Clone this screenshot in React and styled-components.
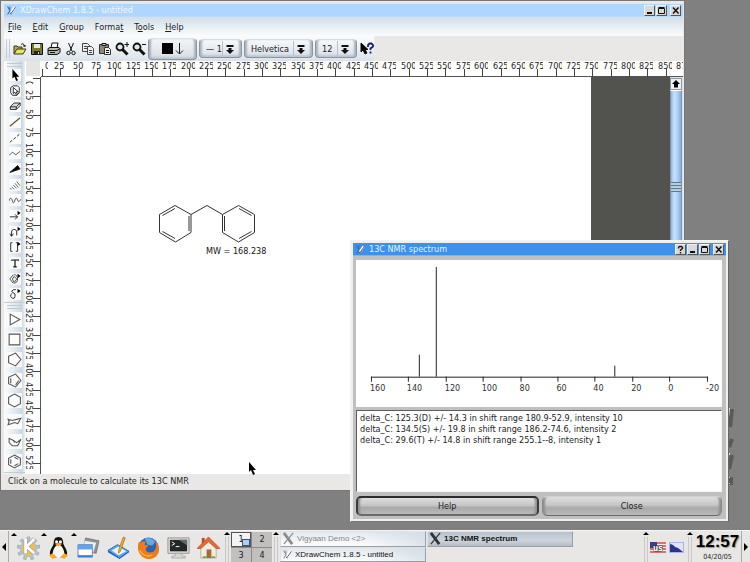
import styled, { createGlobalStyle } from 'styled-components';

const GlobalStyle = createGlobalStyle`
  * {
    box-sizing: border-box;
  }
  body {
    margin: 0;
    background: #808080;
    font-family: 'DejaVu Sans Condensed', 'Liberation Sans', Arial, sans-serif;
    font-size: 9px;
    color: #1c1c1c;
  }
  button, select, textarea {
    font: inherit;
    color: inherit;
    margin: 0;
    padding: 0;
    border: 0;
    background: none;
  }
  svg {
    display: block;
    flex: none;
  }
`;

const Desktop = styled.div`
  position: relative;
  display: flex;
  flex-direction: column;
  height: 100vh;
  min-height: 520px;
  overflow: hidden;
`;

const Workspace = styled.main`
  position: relative;
  flex: 1;
`;

/* ---------- windows ---------- */

const MainWindow = styled.section`
  position: absolute;
  inset: 0 65px 39px 0;
  display: flex;
  flex-direction: column;
  border: 1px solid #77777a;
  padding: 3px 1px 1px 3px;
  background: #e9e8e6;
`;

const Dialog = styled.section`
  position: absolute;
  inset: 240px 21px 8px 350px;
  display: flex;
  flex-direction: column;
  border: 1px solid #f4f4f2;
  border-right-color: #666;
  border-bottom-color: #777;
  padding: 2px;
  background: #efefec;
`;

const TitleBar = styled.header`
  display: flex;
  align-items: center;
  height: 13px;
  flex: none;
  padding: 0 2px 0 2px;
  gap: 3px;
  background: ${props => (props.$active ? '#3e91ea' : '#aed6ff')};
  border-bottom: 1px solid ${props => (props.$active ? '#7db4ee' : '#bcd9f6')};
`;

const Title = styled.h1`
  flex: 1;
  margin: 0;
  font-size: 9px;
  line-height: 12px;
  font-weight: 400;
  color: ${props => (props.$active ? '#e4f1ff' : '#f2f9ff')};
`;

const WindowButtons = styled.div`
  display: flex;
  gap: 1px;

  button:last-child {
    margin-left: 2px;
  }
`;

const WindowButton = styled.button`
  display: flex;
  width: 11px;
  height: 11px;
  border: 1px solid #f2f2f2;
  border-right-color: #555;
  border-bottom-color: #555;
  background: #d9dad8;
`;

const MenuBar = styled.nav`
  display: flex;
  gap: 11px;
  height: 19px;
  flex: none;
  padding: 0 4px;
  background: linear-gradient(#d3dee7, #fafcfd);
`;

const MenuItem = styled.button`
  line-height: 18px;

  u {
    text-underline-offset: 1px;
  }
`;

const ToolBar = styled.div`
  display: flex;
  align-items: center;
  align-self: flex-start;
  height: 25px;
  flex: none;
  padding: 0 0 0 2px;
  background: linear-gradient(#fafbfc, #eef1f4 50%, #d9e2ea);
`;

const Grip = styled.span`
  flex: none;
  width: ${props => (props.$flat ? '15px' : '4px')};
  height: ${props => (props.$flat ? '4px' : '19px')};
  border: 0 solid #c4c9cc;
  border-width: ${props => (props.$flat ? '1px 0' : '0 1px')};
`;

const ToolButton = styled.button`
  display: flex;
  align-items: center;
  justify-content: center;
  width: ${props => (props.$narrow ? '15px' : '17px')};
  height: 20px;
`;

const IconRow = styled.div`
  display: flex;
  margin: 0 1px;
`;

const ColorButton = styled.button`
  display: flex;
  align-items: center;
  justify-content: center;
  width: 49px;
  height: 22px;
  margin-right: 2px;
  border: 1px solid #8d959c;
  border-top-color: #dde2e7;
  border-radius: 4px;
  box-shadow: inset 3px 0 2px -1px #a9b4bf, inset -3px 0 2px -1px #a9b4bf, inset 0 -2px 2px #bfc9d3;
  background: linear-gradient(#f2f5f8, #d7dee5);
`;

const ComboBox = styled.label`
  position: relative;
  display: flex;
  align-items: center;
  width: ${props => props.$width};
  height: 19px;
  margin-right: 2px;
  border: 1px solid #8d959c;
  border-top-color: #d5dbe1;
  border-radius: 4px;
  box-shadow: inset 3px 0 2px -1px #aab5c0, inset -3px 0 2px -1px #aab5c0, inset 0 -2px 2px #bfc9d3;
  background: linear-gradient(#f7f9fb, #d9e0e7);

  select {
    appearance: none;
    width: 100%;
    height: 16px;
    padding-left: 6px;
    line-height: 16px;
    outline: none;
  }
  svg {
    position: absolute;
    right: 3px;
    top: 1px;
    pointer-events: none;
  }
`;

const Body = styled.div`
  display: flex;
  flex: 1;
  min-height: 0;
`;

const ToolColumn = styled.aside`
  display: flex;
  flex-direction: column;
  width: 21px;
  flex: none;
  overflow: hidden;
  background: linear-gradient(90deg, #fbfcfc, #dfe7ee 55%, #c9d7e3 85%, #eef2f5);
`;

const ToolGroup = styled.div`
  display: flex;
  flex-direction: column;
  align-items: center;
  flex: none;
  height: ${props => props.$height};
  padding-top: 2px;
  border-bottom: 1px solid #c9cccd;
`;

const SideButton = styled.button`
  display: flex;
  flex: 1;
  align-items: center;
  justify-content: center;
  width: ${props => (props.$wide ? '17px' : '14px')};

  svg {
    background: #fbfbfb;
  }
`;

const DrawingArea = styled.div`
  display: flex;
  flex: 1;
  flex-direction: column;
  min-width: 0;
  background: #fff;
`;

const RulerStrip = styled.div`
  flex: none;
  overflow: hidden;
  width: ${props => (props.$vertical ? '16px' : '100%')};
  height: ${props => (props.$vertical ? '100%' : '16px')};
`;

const Viewport = styled.div`
  display: flex;
  flex: 1;
  min-height: 0;
`;

const Backdrop = styled.div`
  display: flex;
  flex: 1;
  min-width: 0;
  overflow: hidden;
  background: #52524f;
`;

const Sheet = styled.div`
  flex: none;
  background: #fff;
`;

const ScrollBar = styled.div`
  display: flex;
  flex-direction: column;
  width: 13px;
  flex: none;
  padding: 1px 1px 0 0;
  background: #dbe4ec;
`;

const ScrollArrow = styled.button`
  display: flex;
  align-items: center;
  justify-content: center;
  height: 12px;
  border: 1px solid #8f9aa3;
  background: #eaf1f7;
`;

const ScrollThumb = styled.div`
  display: flex;
  align-items: center;
  height: 194px;
  border: 1px solid #7d94ab;
  border-top-color: #fff;
  background: linear-gradient(90deg, #8db5de, #c7e1ff 30%, #b0d4fc 60%, #85afe0);
`;

const ThumbGrip = styled.span`
  width: 100%;
  height: 10px;
  background: repeating-linear-gradient(#61798c 0 1px, #b4cfe0 1px 3px);
`;

const StatusBar = styled.footer`
  flex: none;
  height: 15px;
  padding: 0 4px;
  line-height: 14px;
  background: #e9e8e6;
`;

/* ---------- spectrum dialog ---------- */

const DialogBody = styled.div`
  display: flex;
  flex: 1;
  flex-direction: column;
  gap: 3px;
  min-height: 0;
  padding: 4px 4px 3px 3px;
  background: #c0c0c0;
`;

const Plot = styled.div`
  flex: none;
  background: #fff;

  svg {
    width: 100%;
    height: auto;
  }
`;

const Peaks = styled.textarea`
  flex: 1;
  width: 100%;
  min-height: 0;
  padding: 2px 3px;
  border: 1px solid #f4f4f4;
  border-top-color: #5d5d5d;
  border-left-color: #5d5d5d;
  background: #fff;
  line-height: 11px;
  resize: none;
  outline: none;
`;

const DialogButtons = styled.div`
  display: flex;
  gap: 3px;
  padding-top: 1px;
`;

const DialogButton = styled.button`
  flex: 1;
  height: 20px;
  line-height: 15px;
  border: ${props => (props.$default ? '2px solid #3c3c3c' : '1px solid #8b8b8b')};
  border-top-color: ${props => (props.$default ? '#2d2d2d' : '#d2d2d2')};
  border-bottom-color: #6a6a6a;
  border-radius: 5px;
  box-shadow: inset 4px 0 2px -2px #8f8f8f, inset -4px 0 2px -2px #8f8f8f;
  background: linear-gradient(#dedede, #c6c6c6 45%, #a9a9a9 60%, #b9b9b9);
`;

/* ---------- panel ---------- */

const Panel = styled.footer`
  display: flex;
  height: 32px;
  flex: none;
  border-top: 1px solid #f6f5f4;
  background: #e9e7e5;
`;

const PanelHide = styled.button`
  display: flex;
  align-items: center;
  justify-content: center;
  width: 9px;
  flex: none;
  border: 0 solid #aaa;
  border-width: ${props => (props.$end ? '0 0 0 1px' : '0 1px 0 0')};
`;

const Launchers = styled.div`
  display: flex;
  padding-left: 4px;
`;

const Launcher = styled.button`
  position: relative;
  display: flex;
  align-items: center;
  justify-content: center;
  width: 30px;
  padding-top: 3px;
`;

const MenuMark = styled.i`
  position: absolute;
  left: -2px;
  top: 2px;
  border: 3px solid transparent;
  border-top-width: 0;
  border-bottom: 3px solid #000;
`;

const PanelGrip = styled.span`
  position: relative;
  width: 4px;
  flex: none;
  margin: 6px 2px 0 2px;
  border: 0 solid #c9c7c5;
  border-width: 0 1px;

  ${MenuMark} {
    top: -5px;
  }
`;

const Pager = styled.div`
  display: grid;
  grid-template-columns: 20px 20px;
  grid-template-rows: 1fr 1fr;
  gap: 1px;
  margin-top: 1px;
  background: #8b8986;
`;

const PagerCell = styled.button`
  position: relative;
  background: ${props => (props.$current ? '#f3f3f3' : '#c2c0be')};
  border: ${props => (props.$current ? '1px solid #555' : '0')};

  i {
    position: absolute;
    right: 0;
    bottom: 0;
    width: 8px;
    height: 7px;
    border: 1px solid #456;
    background: #a9ceff;
  }
`;

const TaskList = styled.div`
  display: grid;
  grid-template-columns: 146px 146px;
  grid-template-rows: 1fr 1fr;
  flex: 1;
  column-gap: 1px;
`;

const Task = styled.button`
  display: flex;
  align-items: center;
  gap: 2px;
  padding: 0 1px;
  font-family: 'Liberation Sans', Arial, sans-serif;
  font-size: 8px;
  white-space: nowrap;
  color: ${props => (props.$dim ? '#85888b' : '#111')};
  font-weight: ${props => (props.$active ? 700 : 400)};
  border: 1px solid #99a1a8;
  border-top-color: #dce1e5;
  border-left-color: #dce1e5;
  background: ${props =>
    props.$active
      ? 'linear-gradient(#b9c2ca, #ccd5dc 60%, #b4bdc6)'
      : 'linear-gradient(90deg, transparent 60%, #c9d6e199), linear-gradient(#e4e9ed, #fbfcfd)'};
`;

const Tray = styled.div`
  display: flex;
  align-items: center;
  gap: 3px;
  padding: 2px 1px 0 0;
`;

const Clock = styled.time`
  display: flex;
  flex-direction: column;
  align-items: center;
  width: 47px;
  font-size: 7px;
  line-height: 8px;

  strong {
    font-family: 'Liberation Sans', Arial, sans-serif;
    font-size: 17px;
    line-height: 22px;
    color: #000;
    text-shadow: 1px 1px 1px #999;
  }
`;

const DesktopLabel = styled.svg`
  position: absolute;
  right: 12px;
  top: 405px;
`;

const Pointer = styled.svg`
  position: absolute;
  left: 248px;
  top: 462px;
`;

/* ---------- icons ---------- */

function Icon({ size = 14, children, ...rest }) {
  return (
    <svg width={size} height={size} viewBox='0 0 14 14' fill='none' stroke='#111' aria-hidden='true' {...rest}>
      {children}
    </svg>
  );
}

const AppIcon = ({ dim }) => (
  <Icon size={11}>
    <path d='M2 2l3 5-3 5M5 7l2 5M5 2v4' stroke={dim ? '#8a8f94' : '#3b6b9e'} strokeWidth='1.3' />
    <path d='M6 10l5-7' stroke='#fff' strokeWidth='3' />
    <path d='M5 11l2-1 5-7' stroke='#345' strokeWidth='1' />
  </Icon>
);

const XIcon = ({ dim }) => (
  <Icon size={13}>
    <path d='M2 1l9 12' stroke={dim ? '#8c8c8c' : '#333'} strokeWidth='3' />
    <path d='M12 1L2 13' stroke={dim ? '#8c8c8c' : '#333'} strokeWidth='1.3' />
  </Icon>
);

const controlGlyphs = {
  Help: <path d='M2.500 3.500V2.500l1-1h2l1 1v1l-2 1.500v1M4.500 7v1.500' strokeWidth='1.400' />,
  Minimize: <path d='M2 7h5' strokeWidth='2' />,
  Maximize: <path d='M1.500 2.500h6v5h-6zM1.500 1.500h6' />,
  Close: <path d='M2 1.500l5.500 6M7.500 1.500L2 7.500' strokeWidth='1.500' />,
};

const DropArrow = () => (
  <svg width='16' height='15' viewBox='0 0 16 15' aria-hidden='true'>
    <path d='M0 0h1v15H0z' fill='#b7c1cb' />
    <path d='M4.500 4h7v2h-7zM6.500 7h3v2h2.500L8 13 4 9h2.500z' fill='#111' />
  </svg>
);

const magnifier = (
  <>
    <circle cx='5' cy='5' r='3.500' fill='#dfe8ee' strokeWidth='1.800' />
    <path d='M7.500 7.500l5 5' strokeWidth='3' />
  </>
);

const toolbarIcons = [
  ['Open', <><path d='M1 12V4h3l1 1h4v2' fill='#b5a94a' stroke='#3b3b10' /><path d='M1 12l3-5h9l-3 5z' fill='#e8e26e' stroke='#3b3b10' /><path d='M8 2.500c2-1.500 3.500 0 3.500 2M10 4h3' /></>],
  ['Save', <><path d='M1.500 1.500h11v11h-11z' fill='#77792b' /><path d='M4 2h6v4H4z' fill='#e8e8d8' stroke='none' /><path d='M4 9h6v4H4z' fill='#222' stroke='none' /><path d='M8 10h1v2H8z' fill='#ddd' stroke='none' /></>],
  ['Print', <><path d='M4 6l1-5h6l-1 5' fill='#fff' /><path d='M1 6.500l2-1h9l1 1v4l-3 2H1z' fill='#b9b9aa' /><path d='M1 8.500h9l3-2M3 10.500h5' /></>],
  ['Cut', <><path d='M4.500 1l3.500 8M9.500 1L6 9' /><circle cx='4.500' cy='11' r='1.700' /><circle cx='9.500' cy='11' r='1.700' /></>],
  ['Copy', <g stroke='#444'><path d='M1.500 1.500h5l2 2v6h-7z' fill='#eee' /><path d='M6.500 4.500h4l2 2v6h-6z' fill='#eee' /><path d='M3 4.500h3M3 6.500h3M8 8.500h3M8 10.500h3' /></g>],
  ['Paste', <><path d='M1.500 2.500h9v9h-9z' fill='#8c8a77' stroke='#333' /><path d='M4 1.500h4v2H4z' fill='#ddd' /><path d='M6.500 5.500h4l2 2v5h-6z' fill='#eee' stroke='#333' /><path d='M8 8.500h3M8 10.500h3' /></>],
  ['Zoom in', <>{magnifier}<path d='M12 0v5M9.500 2.500h5' /></>],
  ['Zoom out', <>{magnifier}<path d='M10 2.500h4' /></>],
];

const flyout = <path d='M10 1l3.500 2.500L10 6z' fill='#000' stroke='none' />;

const drawTools = [
  ['Select', <path d='M4 0v11l2.500-2 1.800 5 2.200-1-2-4h3.500z' fill='#000' stroke='none' />],
  ['Lasso', <><path d='M2 3l3-2h5l2 2v6l-3 3H4L2 9z' /><path d='M5 3v7l2-1.500 2 3.500 1-1-1.500-3H11z' fill='#fff' /></>],
  ['Erase', <path d='M1.500 8L6 3.500h7L8.500 8zM1.500 8v3h7V8M8.500 11L13 6.500v-3' fill='#ddd' />],
  ['Line', <path d='M1 12L13 2' stroke='#55551a' strokeWidth='1.300' />],
  ['Dashed line', <path d='M1 12L13 2' strokeDasharray='3.500 2' />],
  ['Chain', <path d='M0 10l4-4 4 3 5-4' stroke='#444' />],
  ['Wedge', <path d='M1 11L10 3l3 4z' fill='#000' />],
  ['Hash', <path d='M1 11l2 1M3 9l3 3M5 7l4 4M7 5l4 5M9 3l4 5' stroke='#555' />],
  ['Wave', <path d='M0 8c1-4 3-4 4 0s2 2 3-1 2-3 3 0 2 2 4-1' stroke='#333' />],
  ['Arrow', <><path d='M1 8h9M7 5l3 3-3 3' />{flyout}</>],
  ['Curved arrow', <><path d='M3 12V7c0-4 6-4 6 0v4M1 9l2 3 2-3' />{flyout}</>],
  ['Bracket', <><path d='M4 2H2v10h2M8 2h2v10H8' />{flyout}</>],
  ['Text', <path d='M3 3.500h8v1M3 3.500v1M7 3.500v8M5 11.500h4' strokeWidth='1.400' />],
  ['Ring', <><path d='M5 2L1 7l4 5M6 4l3 3-3 4-2-4zM6 2c3 0 4 2 4 5s-1 4-4 5' stroke='#333' />{flyout}</>],
  ['Symbol', <><path d='M8 2H5L3 4l4 3v3l-1 2H4l-2-2V8l2-2' />{flyout}</>],
];

const ringTools = [
  ['Cyclopropane', <path d='M3 2l9 5-9 5z' />],
  ['Cyclobutane', <path d='M2 2h10v10H2z' />],
  ['Cyclopentane', <path d='M1.500 4L8 1l5 6-5 6-6.500-3z' />],
  ['Cyclopentadiene', <path d='M1.500 4L8 1l5 6-5 6-6.500-3zM3.500 5v4.500M8 11l3-4' />],
  ['Cyclohexane', <path d='M7 1l5.500 3v6L7 13l-5.500-3V4z' />],
  ['Chair', <path d='M1 5l4 1 4-1 4-1-3 5-3-1-3 1-3 1 1-3z' />],
  ['Boat', <path d='M2 4v4l3 3h5l3-6-4 3-3-2zM6 6l1 2' />],
  ['Benzene', <path d='M7 1l5.500 3v6L7 13l-5.500-3V4zM3.500 5v4M7 3l3.500 2M10.500 9L7 11' />],
];

/* ---------- rulers ---------- */

const STEP = 18.34;
const makeMarks = last =>
  Array.from({ length: last / 25 + 1 }, (_, i) => ({ value: i * 25, at: Math.round(i * STEP) }));
const labelShift = { 1: 11, 2: 2, 3: 0 };

function RulerLabel({ value, transform }) {
  return (
    <g transform={transform} clipPath='url(#ruler-label)'>
      <text x={labelShift[String(value).length]} y='0'>{value}</text>
    </g>
  );
}

function HorizontalRuler() {
  return (
    <RulerStrip>
      <svg width='100%' height='16' fontSize='9' fill='#222'>
        <clipPath id='ruler-label'>
          <rect x='0' y='-10' width='14' height='12' />
        </clipPath>
        <rect x='1' width='14' height='15' fill='#e6e5e3' />
        <rect x='16' y='15' width='100%' height='1' fill='#555' />
        {makeMarks(875).map(({ value, at }) => (
          <g key={value}>
            <RulerLabel value={value} transform={`translate(${at + 9} 8)`} />
            <path d={`M${at + 17}.500 8v8`} stroke='#444' />
          </g>
        ))}
      </svg>
    </RulerStrip>
  );
}

function VerticalRuler() {
  return (
    <RulerStrip $vertical>
      <svg width='16' height='100%' fontSize='9' fill='#222'>
        <rect x='15' width='1' height='100%' fill='#555' />
        {makeMarks(525).map(({ value, at }) => (
          <g key={value}>
            <RulerLabel value={value} transform={`translate(1 ${at - 7}) rotate(90)`} />
            <path d={`M8 ${at + 1}.500h8`} stroke='#444' />
          </g>
        ))}
      </svg>
    </RulerStrip>
  );
}

function Molecule() {
  return (
    <Sheet>
      <svg width='550' height='398' viewBox='41 77 550 398'>
        <g fill='none' stroke='#333'>
          <path d='M159.500 214.500L175 205.500l16 9v18l-15.500 9.500-16-9.500z' />
          <path d='M191 214.500l16-9 15.500 9' />
          <path d='M222.500 214.500l16-9 16 9v18l-16 9.500-16-9.500z' />
          <path d='M162.500 215.500l12.500-7M189 216v15M162.500 231.500l12.500 7' />
          <path d='M224.500 216v15M239 208.500l12.500 7M251.500 231.500l-12.500 7' />
        </g>
        <text x='206' y='254' fontSize='9' fill='#111'>MW = 168.238</text>
      </svg>
    </Sheet>
  );
}

/* ---------- spectrum ---------- */

const peaks = [
  { shift: 134.5, height: 22 },
  { shift: 125.3, height: 110 },
  { shift: 29.6, height: 11 },
];
const scale = [160, 140, 120, 100, 80, 60, 40, 20, 0, -20];
const shiftToX = shift => Math.round(15 + (160 - shift) * 1.87);

function Spectrum() {
  return (
    <Plot>
      <svg viewBox='0 0 367 147' stroke='#222' fontSize='9'>
        <path d='M15 117.500h338' />
        {scale.map(value => (
          <g key={value}>
            <path d={`M${shiftToX(value)}.500 117v5`} />
            <text x={shiftToX(value) - 1} y='131' fill='#333' stroke='none'>{value}</text>
          </g>
        ))}
        {peaks.map(({ shift, height }) => (
          <path key={shift} d={`M${shiftToX(shift)}.500 117v-${height}`} />
        ))}
      </svg>
    </Plot>
  );
}

function WindowTitle({ title, active, controls }) {
  return (
    <TitleBar $active={active}>
      <AppIcon />
      <Title $active={active}>{title}</Title>
      <WindowButtons>
        {controls.map(name => (
          <WindowButton key={name} aria-label={name}>
            <svg width='9' height='9' viewBox='0 0 9 9' fill='none' stroke='#111'>{controlGlyphs[name]}</svg>
          </WindowButton>
        ))}
      </WindowButtons>
    </TitleBar>
  );
}

function Combo({ label, width, value }) {
  return (
    <ComboBox $width={width}>
      <select aria-label={label} defaultValue={value}>
        <option>{value}</option>
      </select>
      <DropArrow />
    </ComboBox>
  );
}

const menus = [
  [<><u>F</u>ile</>, 'file'],
  [<><u>E</u>dit</>, 'edit'],
  [<><u>G</u>roup</>, 'group'],
  [<>Forma<u>t</u></>, 'format'],
  [<>T<u>o</u>ols</>, 'tools'],
  [<><u>H</u>elp</>, 'help'],
];

function DrawWindow() {
  return (
    <MainWindow>
      <WindowTitle title='XDrawChem 1.8.5 - untitled' controls={['Minimize', 'Maximize', 'Close']} />
      <MenuBar>
        {menus.map(([label, key]) => <MenuItem key={key}>{label}</MenuItem>)}
      </MenuBar>
      <ToolBar>
        <Grip />
        <IconRow>
          {toolbarIcons.map(([name, art]) => (
            <ToolButton key={name} aria-label={name}><Icon size={14}>{art}</Icon></ToolButton>
          ))}
        </IconRow>
        <ColorButton aria-label='Color'>
          <svg width='22' height='13' viewBox='0 0 22 13' fill='none' stroke='#222'>
            <path d='M0 1h11v11H0z' fill='#000' stroke='none' />
            <path d='M17.500 1v11M14 8.500l3.500 3.500L21 8.500' />
          </svg>
        </ColorButton>
        <Combo label='Line width' width='43px' value='— 1' />
        <Combo label='Font' width='69px' value='Helvetica' />
        <Combo label='Font size' width='42px' value='12' />
        <ToolButton $narrow aria-label="What's this">
          <Icon size={14}>
            <path d='M1 1v9l2-2 2 4 2-1-2-3.500h3z' fill='#000' />
            <path d='M8 5V3l1.500-1.500h2L13 3v1.500l-2.500 2V8M10.500 9.500v2' stroke='#1a1a7c' strokeWidth='1.800' />
          </Icon>
        </ToolButton>
      </ToolBar>
      <Body>
        <ToolColumn>
          <ToolGroup $height='242px'>
            <Grip $flat />
            {drawTools.map(([name, art]) => (
              <SideButton key={name} aria-label={name}><Icon size={12}>{art}</Icon></SideButton>
            ))}
          </ToolGroup>
          <ToolGroup $height='170px'>
            <Grip $flat />
            {ringTools.map(([name, art]) => (
              <SideButton key={name} aria-label={name} $wide><Icon size={15} stroke='#555'>{art}</Icon></SideButton>
            ))}
          </ToolGroup>
        </ToolColumn>
        <DrawingArea>
          <HorizontalRuler />
          <Viewport>
            <VerticalRuler />
            <Backdrop><Molecule /></Backdrop>
            <ScrollBar>
              <ScrollArrow aria-label='Scroll up'>
                <svg width='8' height='8' viewBox='0 0 8 8'><path d='M4 0l4 4H6v3.500H2V4H0z' /></svg>
              </ScrollArrow>
              <ScrollThumb><ThumbGrip /></ScrollThumb>
            </ScrollBar>
          </Viewport>
        </DrawingArea>
      </Body>
      <StatusBar>Click on a molecule to calculate its 13C NMR</StatusBar>
    </MainWindow>
  );
}

const peakReport = `delta_C: 125.3(D) +/- 14.3 in shift range 180.9-52.9, intensity 10
delta_C: 134.5(S) +/- 19.8 in shift range 186.2-74.6, intensity 2
delta_C: 29.6(T) +/- 14.8 in shift range 255.1--8, intensity 1`;

function SpectrumDialog() {
  return (
    <Dialog>
      <WindowTitle title='13C NMR spectrum' active controls={['Help', 'Minimize', 'Maximize', 'Close']} />
      <DialogBody>
        <Spectrum />
        <Peaks aria-label='Peaks' readOnly value={peakReport} />
        <DialogButtons>
          <DialogButton $default>Help</DialogButton>
          <DialogButton>Close</DialogButton>
        </DialogButtons>
      </DialogBody>
    </Dialog>
  );
}

const gearTeeth = [0, 40, 80, 120, 160, 200, 240, 280, 320];

const launchers = [
  ['K Menu', true, <>
    {gearTeeth.map(a => <path key={a} d='M10.500 1h3v5h-3z' fill='#b8c3cc' stroke='#8896a2' strokeWidth='.500' transform={`rotate(${a} 12 13)`} />)}
    <circle cx='12' cy='13' r='8' fill='#f7bd45' stroke='#b4bfc8' strokeWidth='2' />
    <path d='M9 3v15M18 3l-8 8 8 7' fill='none' stroke='#8d989f' strokeWidth='4' />
    <path d='M9 3v15M18 3l-8 8 8 7' fill='none' stroke='#fff' strokeWidth='3' />
  </>],
  ['System', true, <>
    <path d='M12 1c4 0 5 3 5 7 1 3 4 6 4 10s-4 5-9 5-9-1-9-5 3-7 4-10c0-4 1-7 5-7z' fill='#111' />
    <path d='M12 9c3 0 6 5 6 9s-3 5-6 5-6-1-6-5 3-9 6-9z' fill='#f5f5f5' />
    <circle cx='10' cy='6' r='1.600' fill='#fff' /><circle cx='14' cy='6' r='1.600' fill='#fff' />
    <path d='M8 8l4-1 4 1-4 3z' fill='#f5a51d' />
    <path d='M2 20l4-2 4 4-4 2zM22 20l-4-2-4 4 4 2z' fill='#f6ab20' />
  </>],
  ['Windows', true, <>
    <path d='M9 2l14 3-3 13-14-3z' fill='#8c9499' stroke='#666' strokeWidth='.700' />
    <path d='M8 5l12 2-3 10H6z' fill='#ecefef' />
    <path d='M1 9h15v13H1z' fill='#fff' stroke='#5d86bb' />
    <path d='M1 9h15v5H1z' fill='#63a4e8' /><path d='M1 21h15' stroke='#397ccb' strokeWidth='2' />
  </>],
  ['Desktop', false, <>
    <path d='M1 15l10-6 12 7-10 7z' fill='#5fa6ef' stroke='#2866b0' />
    <path d='M5 15l7-4 8 5-8 4z' fill='#eaf5ff' />
    <path d='M1 15v2l12 7 10-7v-1l-10 7z' fill='#1c61b8' />
    <path d='M17 1l2 1-5 14-2 2v-3z' fill='#f4ae28' stroke='#9b6811' strokeWidth='.700' />
  </>],
  ['Browser', false, <>
    <circle cx='12' cy='12' r='10.500' fill='#2d62ad' />
    <path d='M8 3c4-2 9 0 11 3l-3 4-5-1z' fill='#68a7df' />
    <path d='M2 6l2 1c2-2 4-2 5-1l-1 3 4 1-3 3c0 3 3 5 6 4 3 0 5-3 5-7l-1-4c3 2 4 5 4 8 0 6-5 10-11 10S1 18 1 12c0-2 0-4 1-6z' fill='#ec7c1e' />
    <path d='M3 15c2 5 8 7 13 5' fill='none' stroke='#f8b43a' strokeWidth='1.500' />
  </>],
  ['Terminal', false, <>
    <path d='M1 2h22v16H1z' fill='#e5e5e2' stroke='#8c8c88' />
    <path d='M3 4h18v12H3z' fill='#232728' /><path d='M12 4h9v6z' fill='#626a6b' />
    <path d='M5 6l3 2-3 2M9 11h4' fill='none' stroke='#fff' />
    <path d='M9 18h6l1 3h3v2H5v-2h3z' fill='#d7d7d2' stroke='#999' strokeWidth='.700' />
  </>],
  ['Home', false, <>
    <path d='M4 12l8-8 8 8v11H4z' fill='#f2ede2' stroke='#a69a85' strokeWidth='.700' />
    <path d='M5 2h3v6H5z' fill='#bd4b27' />
    <path d='M12 1l12 12h-4l-8-7-8 7H0z' fill='#ea6834' stroke='#b4451c' strokeWidth='.700' />
    <path d='M10 14h5v9h-5z' fill='#a46a3b' /><path d='M6 21h4v2H6zM15 21h4v2h-4z' fill='#79a747' />
  </>],
];

function DesktopPanel() {
  return (
    <Panel>
      <PanelHide aria-label='Hide panel'>
        <svg width='4' height='8'><path d='M4 0v8L0 4z' /></svg>
      </PanelHide>
      <Launchers>
        {launchers.map(([name, hasMenu, art]) => (
          <Launcher key={name} aria-label={name}>
            {hasMenu && <MenuMark />}
            <svg width='23' height='24' viewBox='0 0 24 25'>{art}</svg>
          </Launcher>
        ))}
      </Launchers>
      <PanelGrip><MenuMark /></PanelGrip>
      <Pager>
        <PagerCell $current>1<i /></PagerCell>
        <PagerCell>2</PagerCell>
        <PagerCell>3</PagerCell>
        <PagerCell>4</PagerCell>
      </Pager>
      <PanelGrip><MenuMark /></PanelGrip>
      <TaskList>
        <Task $dim><XIcon dim />Vigyaan Demo &lt;2&gt;</Task>
        <Task $active><XIcon />13C NMR spectrum</Task>
        <Task><AppIcon dim />XDrawChem 1.8.5 - untitled</Task>
      </TaskList>
      <PanelGrip><MenuMark /></PanelGrip>
      <Tray>
        <svg width='16' height='12' viewBox='0 0 16 12'>
          <path d='M0 0h16v11H0z' fill='#f4e9e7' />
          <path d='M0 1h16M0 4h16M0 7h16M0 10h16' stroke='#c8504a' strokeWidth='1.500' />
          <path d='M0 0h7v6H0z' fill='#38427f' />
          <text x='3' y='9' fontSize='8' fontWeight='700' fill='#fff' stroke='#333' strokeWidth='1' paintOrder='stroke'>us</text>
        </svg>
        <svg width='16' height='12' viewBox='0 0 16 12'>
          <path d='M0 0h15v11H0z' fill='#a9b4e8' />
          <path d='M1 1l13 9V1z' fill='#dfe5ff' /><path d='M1 2l3 1 2 2 3 1 5 4H1z' fill='#29348d' />
        </svg>
      </Tray>
      <PanelGrip><MenuMark /></PanelGrip>
      <Clock><strong>12:57</strong>04/20/05</Clock>
      <PanelHide $end aria-label='Hide panel right'>
        <svg width='4' height='8'><path d='M0 0v8l4-4z' /></svg>
      </PanelHide>
    </Panel>
  );
}

export default function App() {
  return (
    <Desktop>
      <GlobalStyle />
      <Workspace>
        <DrawWindow />
        <DesktopLabel width='12' height='84' viewBox='0 0 12 84' fill='none'>
          <g stroke='#333' strokeWidth='4' opacity='.500'>
            <path d='M6 4l-2 18M6 34l-3 8M6 50l-3 14M5 72v8' />
          </g>
          <path d='M3 3l-1 12M3 48v2M3 72v1M3 78v1' stroke='#fff' strokeWidth='1.500' />
        </DesktopLabel>
        <Pointer width='8' height='13' viewBox='0 0 8 13'>
          <path d='M1 0v10l2-2 2 5 2-1-2-4h3z' />
        </Pointer>
        <SpectrumDialog />
      </Workspace>
      <DesktopPanel />
    </Desktop>
  );
}
